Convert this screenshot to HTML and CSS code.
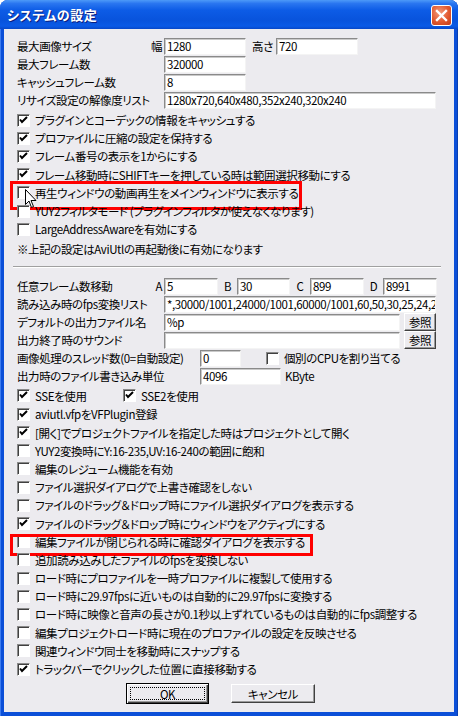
FILE: index.html
```html
<!DOCTYPE html>
<html lang="ja">
<head>
  <meta charset="UTF-8">
  <title>システムの設定</title>
  <link rel="stylesheet" href="styles.css">
</head>
<body>
  <div class="window">
    <div class="titlebar">
      <span class="title">システムの設定</span>
      <span class="close">
        <svg width="13" height="13" viewBox="0 0 13 13"><path d="M2 2 L11 11 M11 2 L2 11" stroke="#fff" stroke-width="2.4" stroke-linecap="square"/></svg>
      </span>
    </div>

    <div class="client">
      <!-- 画像サイズ -->
      <div class="row">
        <span class="label"><span>最大画像サイズ</span><span>幅</span></span>
        <span class="edit w82">1280</span>
        <span class="mid-label">高さ</span>
        <span class="edit w82">720</span>
      </div>
      <div class="row">
        <span class="label">最大フレーム数</span>
        <span class="edit w82">320000</span>
      </div>
      <div class="row">
        <span class="label">キャッシュフレーム数</span>
        <span class="edit w82">8</span>
      </div>
      <div class="row">
        <span class="label">リサイズ設定の解像度リスト</span>
        <span class="edit w272">1280x720,640x480,352x240,320x240</span>
      </div>

      <div class="checks top-checks">
        <div class="check on"><span class="box"></span>プラグインとコーデックの情報をキャッシュする</div>
        <div class="check on"><span class="box"></span>プロファイルに圧縮の設定を保持する</div>
        <div class="check on"><span class="box"></span>フレーム番号の表示を1からにする</div>
        <div class="check on"><span class="box"></span>フレーム移動時にSHIFTキーを押している時は範囲選択移動にする</div>
        <div class="check mark-a"><span class="box"></span>再生ウィンドウの動画再生をメインウィンドウに表示する
          <svg class="pointer" width="12" height="20" viewBox="0 0 12 20"><path d="M0.5 0.5 L0.5 15.5 L4 12 L6.5 18.5 L8.5 17.5 L6 11.5 L11 11.5 Z" fill="#fff" stroke="#000" stroke-width="1"/></svg>
        </div>
        <div class="check"><span class="box"></span>YUY2フィルタモード (プラグインフィルタが使えなくなります)</div>
        <div class="check"><span class="box"></span>LargeAddressAwareを有効にする</div>
      </div>
      <div class="note">※上記の設定はAviUtlの再起動後に有効になります</div>

      <div class="separator"></div>

      <div class="row">
        <span class="label"><span>任意フレーム数移動</span><span>A</span></span>
        <span class="edit w54">5</span>
        <span class="key">B</span>
        <span class="edit w53">30</span>
        <span class="key wide">C</span>
        <span class="edit w54">899</span>
        <span class="key">D</span>
        <span class="edit w54">8991</span>
      </div>
      <div class="row">
        <span class="label">読み込み時のfps変換リスト</span>
        <span class="edit w272">*,30000/1001,24000/1001,60000/1001,60,50,30,25,24,2</span>
      </div>
      <div class="row">
        <span class="label">デフォルトの出力ファイル名</span>
        <span class="edit w236">%p</span>
        <span class="btn small">参照</span>
      </div>
      <div class="row">
        <span class="label">出力終了時のサウンド</span>
        <span class="edit w236"></span>
        <span class="btn small">参照</span>
      </div>
      <div class="row">
        <span class="label long">画像処理のスレッド数(0=自動設定)</span>
        <span class="edit w41">0</span>
        <div class="check inline"><span class="box"></span>個別のCPUを割り当てる</div>
      </div>
      <div class="row">
        <span class="label long">出力時のファイル書き込み単位</span>
        <span class="edit w81">4096</span>
        <span class="unit">KByte</span>
      </div>

      <div class="row sse">
        <div class="check on sse1"><span class="box"></span>SSEを使用</div>
        <div class="check on"><span class="box"></span>SSE2を使用</div>
      </div>

      <div class="checks list">
        <div class="check on"><span class="box"></span>aviutl.vfpをVFPlugin登録</div>
        <div class="check on"><span class="box"></span>[開く]でプロジェクトファイルを指定した時はプロジェクトとして開く</div>
        <div class="check"><span class="box"></span>YUY2変換時にY:16-235,UV:16-240の範囲に飽和</div>
        <div class="check"><span class="box"></span>編集のレジューム機能を有効</div>
        <div class="check"><span class="box"></span>ファイル選択ダイアログで上書き確認をしない</div>
        <div class="check"><span class="box"></span>ファイルのドラッグ＆ドロップ時にファイル選択ダイアログを表示する</div>
        <div class="check on"><span class="box"></span>ファイルのドラッグ＆ドロップ時にウィンドウをアクティブにする</div>
        <div class="check mark-b"><span class="box"></span>編集ファイルが閉じられる時に確認ダイアログを表示する</div>
        <div class="check"><span class="box"></span>追加読み込みしたファイルのfpsを変換しない</div>
        <div class="check"><span class="box"></span>ロード時にプロファイルを一時プロファイルに複製して使用する</div>
        <div class="check"><span class="box"></span>ロード時に29.97fpsに近いものは自動的に29.97fpsに変換する</div>
        <div class="check"><span class="box"></span>ロード時に映像と音声の長さが0.1秒以上ずれているものは自動的にfps調整する</div>
        <div class="check"><span class="box"></span>編集プロジェクトロード時に現在のプロファイルの設定を反映させる</div>
        <div class="check"><span class="box"></span>関連ウィンドウ同士を移動時にスナップする</div>
        <div class="check on"><span class="box"></span>トラックバーでクリックした位置に直接移動する</div>
      </div>

      <div class="buttons">
        <span class="btn default"><span class="focus">OK</span></span>
        <span class="btn cancel">キャンセル</span>
      </div>
    </div>
  </div>
</body>
</html>
```

FILE: styles.css
```css
* {
  box-sizing: border-box;
}

body {
  margin: 0;
  width: 458px;
  height: 716px;
  overflow: hidden;
  background: #fff;
  font-family: "Noto Sans CJK JP", "Liberation Sans", sans-serif;
  font-size: 11.5px;
  letter-spacing: -0.4px;
  font-feature-settings: "palt";
  color: #000;
}

.window {
  width: 458px;
  height: 716px;
  background: #0b4fd8;
  border-radius: 8px 8px 0 0;
  padding: 0 4px 4px;
  display: flex;
  flex-direction: column;
  box-shadow: inset 1px 0 #3d7cf0, inset -1px 0 #0a3fb0;
}

.titlebar {
  height: 29px;
  margin: 0 -4px;
  padding: 0 6px 0 7px;
  border-radius: 8px 8px 0 0;
  background: linear-gradient(#4d9af8 0%, #2a76f0 12%, #0d5ce6 35%, #0853dc 70%, #0a5ae6 90%, #0747c8 100%);
  display: flex;
  align-items: center;
  justify-content: space-between;
}

.title {
  color: #fff;
  font-weight: bold;
  font-size: 13px;
  letter-spacing: 0.5px;
  text-shadow: 1px 1px #0a1e80;
}

.close {
  width: 21px;
  height: 21px;
  margin-top: 1px;
  border: 1px solid #fff;
  border-radius: 3px;
  background: radial-gradient(circle at 40% 35%, #f29b7c 0%, #e2592f 55%, #c23c1a 100%);
  display: flex;
  align-items: center;
  justify-content: center;
}

.client {
  flex: 1;
  background: #ecebef;
  padding: 8px 0 0 13px;
  position: relative;
}

.row {
  display: flex;
  align-items: center;
  height: 18px;
}

.label {
  width: 147px;
  display: flex;
  justify-content: space-between;
  padding-right: 2px;
  white-space: nowrap;
}

.label.long {
  width: 183px;
}

.mid-label {
  width: 30px;
  padding-left: 6px;
}

.edit {
  height: 17px;
  background: #fff;
  border-top: 1px solid #8a8a8a;
  border-left: 1px solid #8a8a8a;
  border-right: 1px solid #f4f4f4;
  border-bottom: 1px solid #f4f4f4;
  box-shadow: inset 1px 1px #c9c9c9;
  padding: 0 2px;
  line-height: 15px;
  white-space: nowrap;
  overflow: hidden;
}

.w41 { width: 41px; }
.w53 { width: 53px; }
.w54 { width: 54px; }
.w81 { width: 81px; }
.w82 { width: 82px; }
.w236 { width: 236px; }
.w272 { width: 272px; }

.key {
  width: 19px;
  text-align: center;
}

.key.wide {
  width: 20px;
}

.unit {
  padding-left: 4px;
}

.btn {
  display: inline-flex;
  align-items: center;
  justify-content: center;
  background: #ecebef;
  border-top: 1px solid #fff;
  border-left: 1px solid #fff;
  border-right: 1px solid #404040;
  border-bottom: 1px solid #404040;
  box-shadow: inset -1px -1px #9a9a9a;
}

.btn.small {
  width: 32px;
  height: 18px;
  margin-left: 4px;
}

.checks .check {
  height: 18.2px;
}

.check {
  display: flex;
  align-items: center;
  white-space: nowrap;
  position: relative;
}

.box {
  width: 13px;
  height: 13px;
  margin-right: 5px;
  flex-shrink: 0;
  background: #fff;
  border-top: 1px solid #8a8a8a;
  border-left: 1px solid #8a8a8a;
  border-right: 1px solid #fff;
  border-bottom: 1px solid #fff;
  box-shadow: inset 1px 1px #404040;
}

.check.on .box {
  background: #fff url("data:image/svg+xml;utf8,<svg xmlns='http://www.w3.org/2000/svg' width='11' height='11'><path d='M2 4.5 L4 7 L9 2' fill='none' stroke='black' stroke-width='2'/></svg>") no-repeat 0 0;
}

.top-checks {
  margin-top: 2px;
}

.note {
  height: 22px;
  display: flex;
  align-items: center;
}

.separator {
  height: 2px;
  margin: 6px 13px 9px -4px;
  border-top: 1px solid #a0a0a0;
  border-bottom: 1px solid #fff;
}

.check.inline {
  margin-left: 25px;
}

.sse {
  height: 19px;
  margin-top: 1px;
}

.sse1 {
  width: 106px;
}

.list {
  margin-top: 0;
}

.mark-a::after,
.mark-b::after {
  content: "";
  position: absolute;
  border: 3px solid #ff0000;
}

.mark-a::after {
  left: -7px;
  top: -3px;
  width: 286px;
  height: 23px;
}

.mark-b::after {
  left: -7px;
  top: 1px;
  width: 297px;
  height: 16px;
}

.pointer {
  position: absolute;
  left: 8px;
  top: 5px;
  z-index: 2;
}

.buttons {
  display: flex;
  justify-content: center;
  gap: 22px;
  margin-top: 5px;
  padding-right: 30px;
}

.btn.default {
  width: 83px;
  height: 21px;
  border: 1px solid #000;
  box-shadow: inset 1px 1px #fff, inset -1px -1px #404040, inset -2px -2px #9a9a9a;
  padding: 3px;
}

.focus {
  width: 100%;
  height: 100%;
  border: 1px dotted #000;
  display: flex;
  align-items: center;
  justify-content: center;
}

.btn.cancel {
  width: 84px;
  height: 19px;
  margin-top: 1px;
}
```
